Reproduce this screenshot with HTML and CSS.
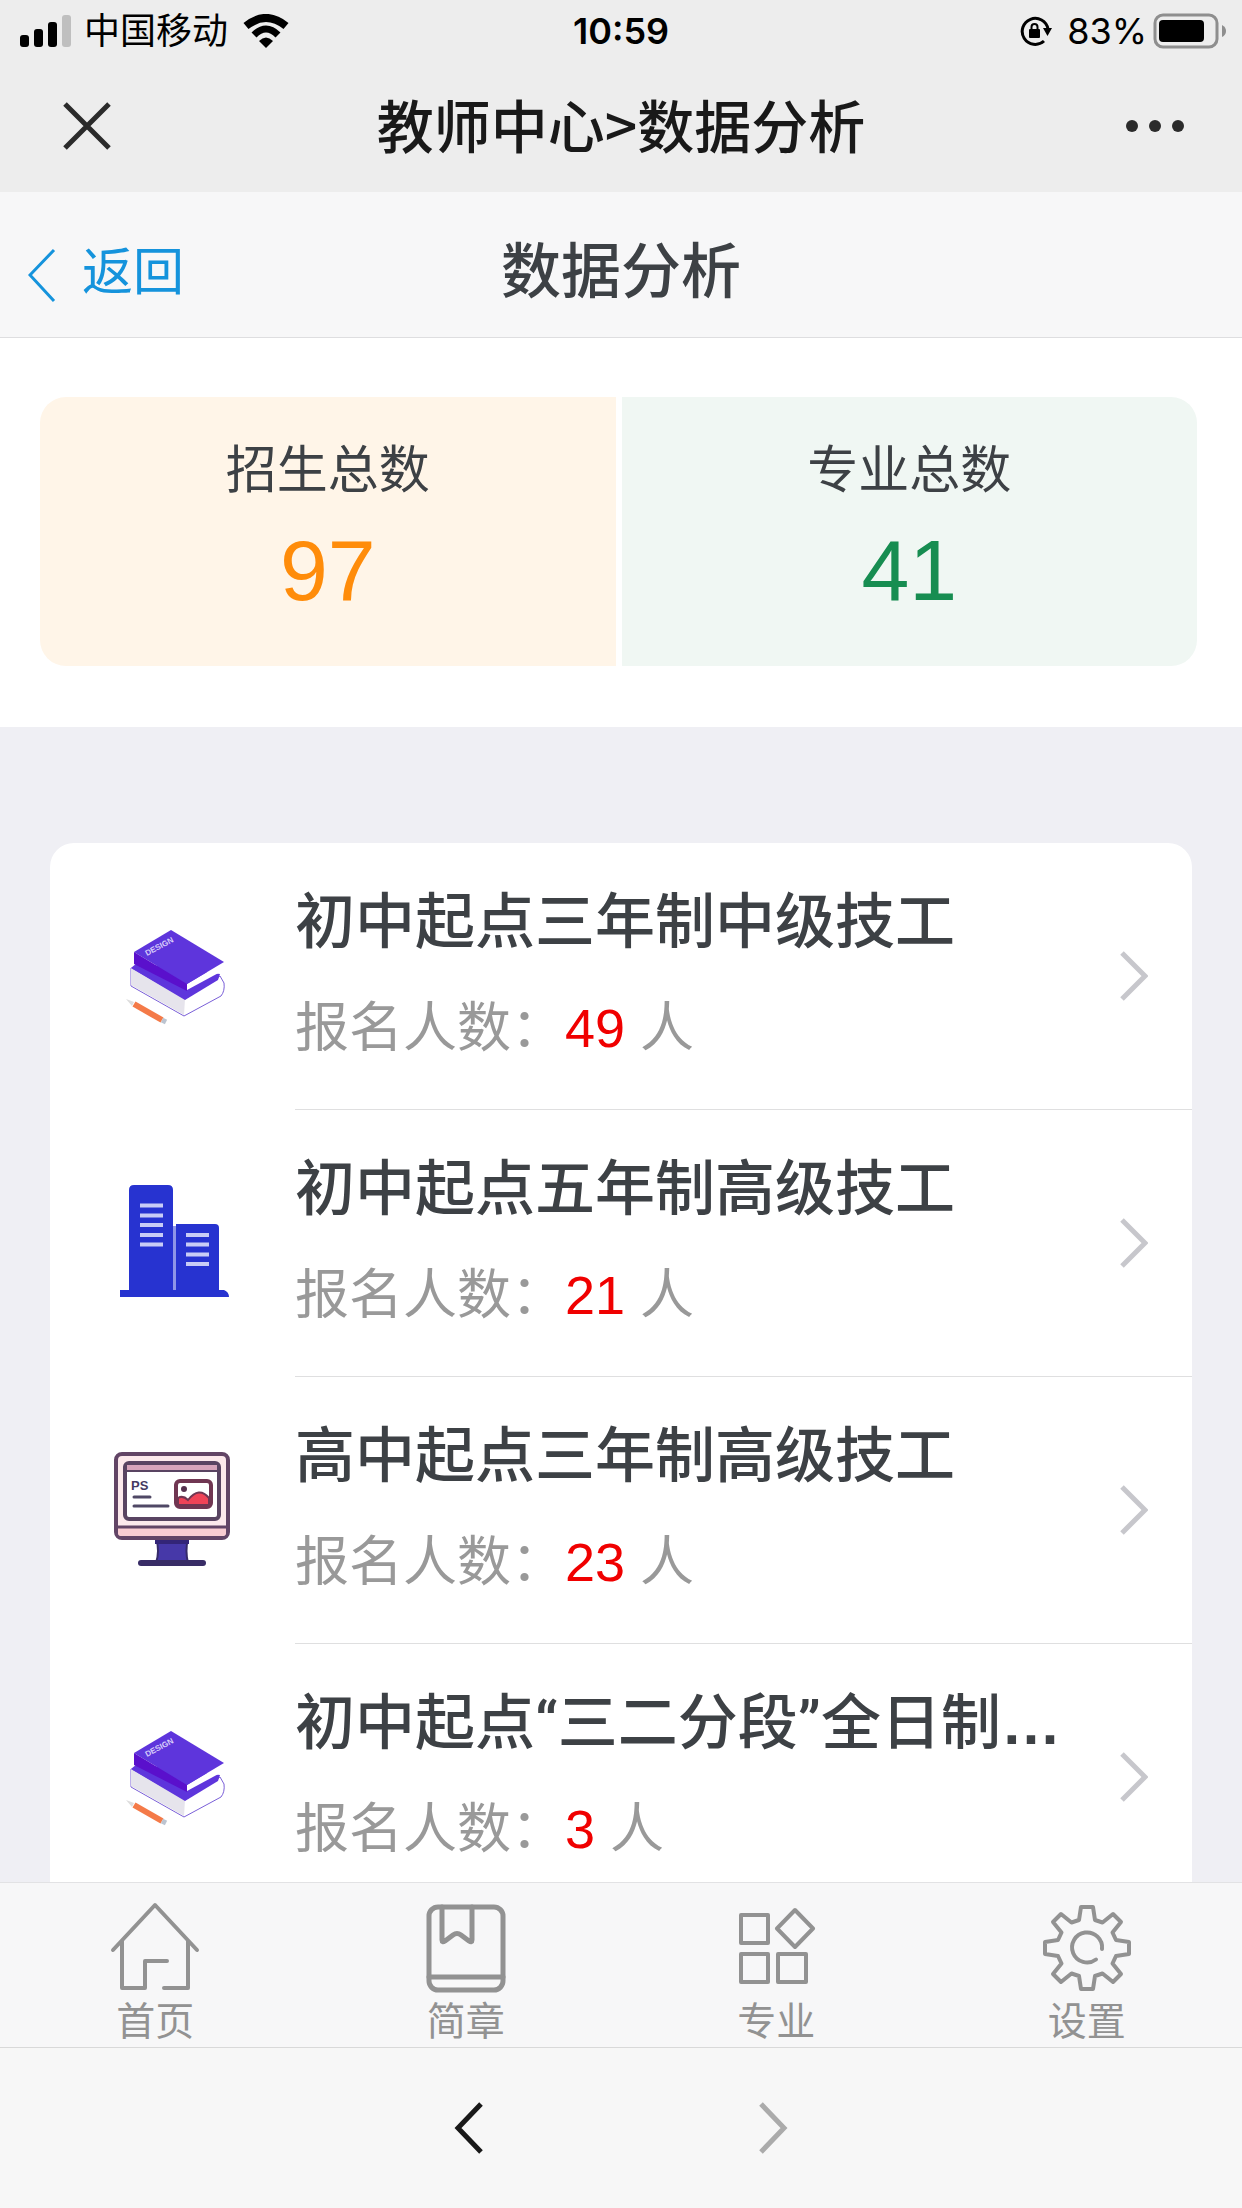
FILE: index.html
```html
<!DOCTYPE html>
<html lang="zh-CN">
<head>
<meta charset="utf-8">
<meta name="viewport" content="width=device-width, initial-scale=1">
<title>教师中心&gt;数据分析</title>
<link rel="stylesheet" href="styles.css">
</head>
<body>
<div class="app">
  <div class="status">
    <div class="status-side">
      <svg class="signal" viewBox="0 0 52 34"><rect y="21" width="9" height="12" rx="3"/><rect x="14" y="15" width="9" height="18" rx="3"/><rect x="28" y="8" width="9" height="25" rx="3"/><rect x="42" y="1" width="9" height="32" rx="3" fill="#bfbfbf"/></svg>
      <span class="carrier">中国移动</span>
      <svg class="wifi" viewBox="0 0 46 34"><path d="M3 12Q23 -4 43 12" fill="none" stroke="#000" stroke-width="8"/><path d="M11 21Q23 9 35 21" fill="none" stroke="#000" stroke-width="7"/><path d="M16 27Q23 20 30 27L23 34Z"/></svg>
    </div>
    <span class="time">10:59</span>
    <div class="status-side status-end">
      <svg class="lock" viewBox="0 0 32 32"><path d="M24 26A13 13 0 1 1 28 14" fill="none" stroke="#000" stroke-width="3"/><path d="M23 13H32L27.500 21Z"/><rect x="9" y="14" width="11" height="9" rx="1"/><path d="M11.500 15V12Q11.500 9 14.500 9T17.500 12V15" fill="none" stroke="#000" stroke-width="2"/></svg>
      <span class="percent">83%</span>
      <svg class="battery" viewBox="0 0 74 36"><rect x="2" y="2" width="62" height="32" rx="8" fill="none" stroke="#8e8e8e" stroke-width="3"/><rect x="6" y="7" width="45" height="22" rx="4"/><path d="M69 12Q73 14 73 18T69 24Z" fill="#8e8e8e"/></svg>
    </div>
  </div>

  <header class="browser-bar">
    <button class="icon-button" type="button" aria-label="关闭"><svg class="close" viewBox="0 0 48 48"><path d="M2 2L46 46M46 2L2 46" stroke="#2b2b2b" stroke-width="5"/></svg></button>
    <h1 class="browser-title">教师中心&gt;数据分析</h1>
    <button class="icon-button icon-button-end" type="button" aria-label="更多"><svg class="more" viewBox="0 0 58 12"><g fill="#2b2b2b"><circle cx="6" cy="6" r="6"/><circle cx="29" cy="6" r="6"/><circle cx="52" cy="6" r="6"/></g></svg></button>
  </header>

  <div class="page-bar">
    <a class="back" href="#"><svg class="back-arrow" viewBox="0 0 28 64"><path d="M26 9L2 34L26 60" fill="none" stroke="currentColor" stroke-width="3"/></svg>返回</a>
    <h2 class="page-title">数据分析</h2>
  </div>

  <main class="content">
    <section class="summary">
      <div class="stat stat-enrol"><span class="stat-label">招生总数</span><strong class="stat-value">97</strong></div>
      <div class="stat stat-major"><span class="stat-label">专业总数</span><strong class="stat-value">41</strong></div>
    </section>
    <ul class="list">
      <li><a class="row" href="#">
        <svg class="row-icon" viewBox="0 0 120 120" aria-hidden="true">
          <path d="M19 51L73 82L108 59L112 66Q113 74 109 79L72 99L19 69Z" fill="#fff" stroke="#7a5fd8" stroke-width="1"/>
          <path d="M19 51L73 82L72 98L19 68Z" fill="#e6e4ec"/>
          <path d="M19 51L25 46L108 57L106 63L73 83Z" fill="#5e35dc"/>
          <path d="M75 67L112 45V53L75 73Z" fill="#fff"/>
          <path d="M59 13L112 45L75 67L22 35Z" fill="#5e35dc"/>
          <path d="M22 35L75 67V74L22 47Z" fill="#5a10cc"/>
          <text x="35" y="39" font-size="8" font-weight="700" fill="#d6ccfa" transform="rotate(-28 35 39)">DESIGN</text>
          <path d="M22 87L50 103" stroke="#f47a48" stroke-width="6"/>
          <path d="M14 82L22 85L20 89Z" fill="#ddd"/>
          <path d="M50 103L54 105" stroke="#bcc4d0" stroke-width="5"/>
        </svg>
        <div class="row-body"><div class="row-text"><h3 class="row-title"><span class="row-name">初中起点三年制中级技工</span></h3><p class="row-count">报名人数：<span class="number">49</span> 人</p></div><svg class="row-arrow" viewBox="0 0 28 50"><path d="M2 2L25 25L2 48"/></svg></div></a></li>
      <li><a class="row" href="#">
        <svg class="row-icon" viewBox="0 0 120 120" aria-hidden="true">
          <path d="M17 106V6Q17 1 22 1H56Q61 1 61 6V106Z" fill="#2733d0"/>
          <path d="M64 106V40H103Q107 40 107 44V106Z" fill="#2733d0"/>
          <path d="M61 42H64V106H61Z" fill="#8f96e8"/>
          <path d="M8 106H112Q117 108 117 113H8Z" fill="#2733d0"/>
          <path d="M28 21.500H51M28 31.500H51M28 41H51M28 51H51M28 60.500H51M74 51H97M74 60.500H97M74 70.500H97M74 80H97" stroke="#c9cdf6" stroke-width="4"/>
        </svg>
        <div class="row-body"><div class="row-text"><h3 class="row-title"><span class="row-name">初中起点五年制高级技工</span></h3><p class="row-count">报名人数：<span class="number">21</span> 人</p></div><svg class="row-arrow" viewBox="0 0 28 50"><path d="M2 2L25 25L2 48"/></svg></div></a></li>
      <li><a class="row" href="#">
        <svg class="row-icon" viewBox="0 0 120 120" aria-hidden="true">
          <path d="M44 87H76Q73 100 76 112H44Q48 100 44 87Z" fill="#4638a8" stroke="#352a68" stroke-width="2"/>
          <path d="M43 87H77V93H43Z" fill="#332578"/>
          <path d="M29 112H91" stroke="#382c66" stroke-width="6" stroke-linecap="round"/>
          <rect x="4" y="3" width="112" height="84" rx="6" fill="#fce9ec" stroke="#624566" stroke-width="4"/>
          <path d="M6 76H114V82Q114 85 111 85H9Q6 85 6 82Z" fill="#f9cdd2"/>
          <path d="M4 76H116" stroke="#624566" stroke-width="3"/>
          <rect x="13" y="12" width="94" height="56" rx="4" fill="#fff" stroke="#594462" stroke-width="4"/>
          <path d="M15 14H105V19H15Z" fill="#d7a4bb"/>
          <path d="M14 20H106" stroke="#594462" stroke-width="2"/>
          <text x="19" y="39" font-size="13" font-weight="700" fill="#443a62">PS</text>
          <path d="M22 46H38M22 55H56" stroke="#4f4865" stroke-width="3" stroke-linecap="round"/>
          <rect x="64" y="30" width="35" height="26" rx="4" fill="#fff" stroke="#703652" stroke-width="4"/>
          <path d="M66 47Q71 44 76 49Q87 35 97 47V54H66Z" fill="#ef4357" stroke="#703652" stroke-width="2"/>
          <circle cx="72" cy="38" r="3" fill="#55304e"/>
        </svg>
        <div class="row-body"><div class="row-text"><h3 class="row-title"><span class="row-name">高中起点三年制高级技工</span></h3><p class="row-count">报名人数：<span class="number">23</span> 人</p></div><svg class="row-arrow" viewBox="0 0 28 50"><path d="M2 2L25 25L2 48"/></svg></div></a></li>
      <li><a class="row" href="#">
        <svg class="row-icon" viewBox="0 0 120 120" aria-hidden="true">
          <path d="M19 51L73 82L108 59L112 66Q113 74 109 79L72 99L19 69Z" fill="#fff" stroke="#7a5fd8" stroke-width="1"/>
          <path d="M19 51L73 82L72 98L19 68Z" fill="#e6e4ec"/>
          <path d="M19 51L25 46L108 57L106 63L73 83Z" fill="#5e35dc"/>
          <path d="M75 67L112 45V53L75 73Z" fill="#fff"/>
          <path d="M59 13L112 45L75 67L22 35Z" fill="#5e35dc"/>
          <path d="M22 35L75 67V74L22 47Z" fill="#5a10cc"/>
          <text x="35" y="39" font-size="8" font-weight="700" fill="#d6ccfa" transform="rotate(-28 35 39)">DESIGN</text>
          <path d="M22 87L50 103" stroke="#f47a48" stroke-width="6"/>
          <path d="M14 82L22 85L20 89Z" fill="#ddd"/>
          <path d="M50 103L54 105" stroke="#bcc4d0" stroke-width="5"/>
        </svg>
        <div class="row-body"><div class="row-text"><h3 class="row-title"><span class="row-name">初中起点<span class="quote">“</span>三二分段<span class="quote">”</span>全日制高级技工</span></h3><p class="row-count">报名人数：<span class="number">3</span> 人</p></div><svg class="row-arrow" viewBox="0 0 28 50"><path d="M2 2L25 25L2 48"/></svg></div></a></li>
    </ul>
  </main>

  <nav class="tabs">
    <a class="tab" href="#"><svg class="tab-icon" viewBox="0 0 90 92"><path d="M3 49L45 4L87 49M12 40V87H35V60H57M54 87H78V40"/></svg>首页</a>
    <a class="tab" href="#"><svg class="tab-icon tab-icon-bold" viewBox="0 0 90 92"><rect x="8" y="6" width="74" height="83" rx="9"/><path d="M8 76H82M21 6V39Q21 42 24 40L32 34Q36 31 40 34L48 40Q51 42 51 39V6"/></svg>简章</a>
    <a class="tab" href="#"><svg class="tab-icon" viewBox="0 0 90 92"><path d="M10 14H37V42H10ZM10 53H37V81H10ZM47 53H75V81H47ZM64 9L82 27.500L64 46L46 27.500Z"/></svg>专业</a>
    <a class="tab" href="#"><svg class="tab-icon" viewBox="0 0 90 92"><path d="M39 6H51L53 19L60.500 21.500L71 13L79 21L70.500 31.500L74 39L87 41V53L74 55L70.500 62.500L79 73L71 81L60.500 72.500L53 75L51 88H39L37 75L29.500 72.500L19 81L11 73L19.500 62.500L16 55L3 53V41L16 39L19.500 31.500L11 21L19 13L29.500 21.500L37 19ZM60 48A15 15 0 1 0 54 58.500"/></svg>设置</a>
  </nav>

  <nav class="history">
    <button class="history-button" type="button" aria-label="后退"><svg class="history-icon" viewBox="0 0 32 52"><path d="M28 2L5 26L28 50"/></svg></button>
    <button class="history-button history-next" type="button" aria-label="前进"><svg class="history-icon" viewBox="0 0 32 52"><path d="M4 2L27 26L4 50"/></svg></button>
  </nav>
</div>
</body>
</html>
```
FILE: styles.css
```css
* { box-sizing: border-box; }

body {
  margin: 0;
  font-family: "Liberation Sans", "Noto Sans CJK SC", sans-serif;
  color: #3d4145;
}

h1, h2, h3, p, ul { margin: 0; padding: 0; }
h1, h2 { font-weight: 500; }
ul { list-style: none; }
a { color: inherit; text-decoration: none; }
button { border: 0; padding: 0; background: none; }
svg { display: block; flex: none; }

.app {
  display: flex;
  flex-direction: column;
  height: 100vh;
  background: #efeff4;
}

/* phone status bar */
.status {
  display: flex;
  align-items: center;
  height: 60px;
  padding: 2px 15px 0;
  background: #ededed;
  color: #000;
  font-family: Inter, "Noto Sans CJK SC", sans-serif;
  font-size: 36px;
  line-height: 60px;
}
.status-side { flex: 1; display: flex; align-items: center; }
.status-end { justify-content: flex-end; }
.signal { width: 52px; height: 34px; margin-left: 5px; }
.carrier { margin: 0 15px 0 12px; }
.wifi { width: 46px; height: 34px; }
.time { font-weight: 600; }
.lock { width: 32px; height: 32px; margin-right: 15px; }
.percent { margin-right: 6px; }
.battery { width: 74px; height: 36px; }

/* in-app browser bar */
.browser-bar {
  display: flex;
  align-items: center;
  height: 132px;
  padding: 0 58px;
  background: #ededed;
}
.icon-button { flex: 1; }
.close { width: 48px; height: 48px; margin-left: 5px; }
.more { width: 58px; height: 12px; }
.icon-button-end { display: flex; justify-content: flex-end; }
.browser-title {
  margin-bottom: 6px;
  color: #191919;
  font-family: "Noto Sans CJK SC", sans-serif;
  font-size: 57px;
  line-height: 80px;
}

.page-bar {
  display: grid;
  grid-template-columns: 1fr auto 1fr;
  align-items: center;
  height: 146px;
  padding: 16px 28px 0;
  border-bottom: 1px solid #dedee0;
  background: #f7f7f8;
}
.back {
  display: flex;
  align-items: center;
  gap: 26px;
  color: #1593dc;
  font-size: 51px;
  line-height: 72px;
}
.back-arrow { width: 28px; height: 64px; }
.page-title { font-size: 60px; line-height: 84px; }

.content {
  flex: 1;
  min-height: 0;
  overflow-y: auto;
  scrollbar-width: none;
}

.summary {
  display: grid;
  grid-template-columns: 1fr 1fr;
  gap: 6px;
  padding: 59px 45px 61px 40px;
  background: #fff;
}
.stat {
  display: flex;
  flex-direction: column;
  align-items: center;
  height: 269px;
  padding-top: 38px;
}
.stat-enrol { border-radius: 26px 0 0 26px; background: #fff5e8; }
.stat-major { border-radius: 0 26px 26px 0; background: #f0f7f3; }
.stat-label { font-size: 51px; line-height: 72px; }
.stat-value { font-size: 86px; font-weight: 400; line-height: 126px; }
.stat-enrol .stat-value { color: #ff8c0a; }
.stat-major .stat-value { color: #178d51; }

.list {
  margin: 116px 50px 0;
  border-radius: 24px;
  background: #fff;
}
.row { display: flex; align-items: center; gap: 63px; padding-left: 62px; }
.row-icon { width: 120px; height: 120px; }
.row-body {
  flex: 1;
  min-width: 0;
  display: flex;
  align-items: center;
  gap: 40px;
  height: 267px;
  padding-right: 44px;
  border-bottom: 1px solid #dfdfe0;
}
.row-text { flex: 1; min-width: 0; padding-bottom: 4px; }
/* bold on the block gives the ellipsis its heavier dots */
.row-title {
  overflow: hidden;
  font-size: 60px;
  font-weight: 700;
  line-height: 90px;
  white-space: nowrap;
  text-overflow: ellipsis;
}
.row-name { font-weight: 500; }
.quote { font-family: Roboto, sans-serif; }
.row-count { margin-top: 18px; color: #999; font-size: 54px; line-height: 84px; }
.number { color: #f00000; }
.row-arrow { width: 28px; height: 50px; fill: none; stroke: #c7c7cc; stroke-width: 5; }

.tabs {
  display: grid;
  grid-template-columns: repeat(4, 1fr);
  height: 165px;
  padding-top: 18px;
  border-top: 1px solid #e2e2e4;
  background: #f7f7f8;
}
.tab {
  display: flex;
  flex-direction: column;
  align-items: center;
  color: #929292;
  font-size: 39px;
  line-height: 58px;
}
.tab-icon { width: 90px; height: 92px; fill: none; stroke: #929292; stroke-width: 4; stroke-linecap: round; stroke-linejoin: round; }
.tab-icon-bold { stroke-width: 5; }

.history {
  display: flex;
  align-items: center;
  justify-content: center;
  gap: 272px;
  height: 161px;
  border-top: 1px solid #d9d9d9;
  background: #f7f7f7;
}
.history-button { color: #191919; }
.history-next { color: #ababab; }
.history-icon { width: 32px; height: 52px; fill: none; stroke: currentColor; stroke-width: 5; }
```
